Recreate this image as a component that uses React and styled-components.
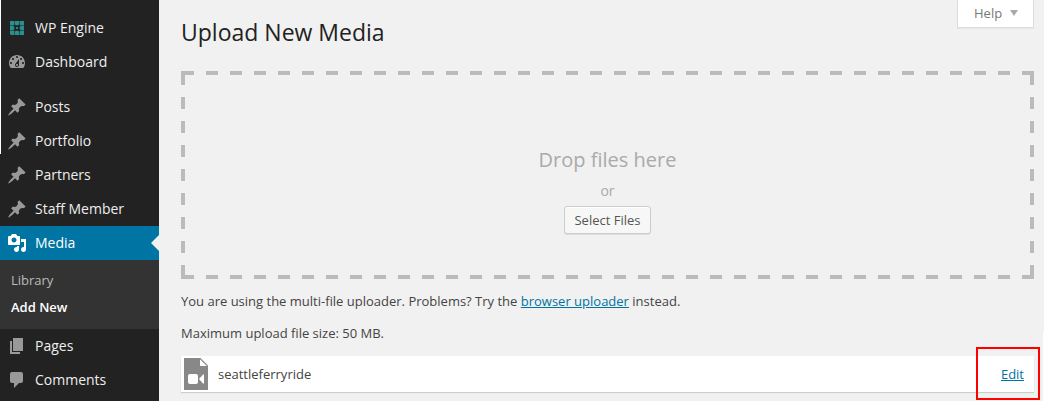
import React from "react";
import styled, { createGlobalStyle, css } from "styled-components";

const GlobalStyle = createGlobalStyle`
  * { box-sizing: border-box; }
  body {
    margin: 0;
    overflow: hidden;
    background: #f1f1f1;
    color: #444;
    font: 13px/20px "Open Sans", sans-serif;
  }
`;

const Page = styled.div`
  display: flex;
  height: 401px;
  position: relative;
`;

const Sidebar = styled.nav`
  width: 159px;
  flex: none;
  padding-top: 11px;
  background: #222;
`;

const MenuItem = styled.a`
  display: flex;
  align-items: center;
  gap: 8px;
  position: relative;
  height: 34px;
  padding-left: 7px;
  color: #eee;
  font-size: 14px;
  ${(p) =>
    p.$active &&
    css`
      background: #0074a2;
      color: #fff;
      &::after {
        content: "";
        position: absolute;
        right: 0;
        top: 9px;
        border: 8px solid transparent;
        border-right-color: #f1f1f1;
        border-left: 0;
      }
    `}
`;

const MenuIcon = styled.svg`
  width: 20px;
  height: 20px;
  flex: none;
  fill: ${(p) => p.$color || "#999"};
`;

const MenuGap = styled.div`
  height: 11px;
`;

const Submenu = styled.div`
  display: flex;
  flex-direction: column;
  height: 69px;
  padding: 7px 11px;
  background: #333;
`;

const SubmenuLink = styled.a`
  line-height: 27px;
  color: ${(p) => (p.$current ? "#fff" : "#bbb")};
  font-weight: ${(p) => (p.$current ? 600 : 400)};
`;

const Main = styled.main`
  flex: 1;
  padding: 0 10px 0 22px;
`;

const Header = styled.header`
  display: flex;
  justify-content: space-between;
  align-items: flex-start;
  height: 71px;
`;

const Title = styled.h1`
  margin: 18px 0 0;
  color: #222;
  font-size: 23px;
  line-height: 29px;
  font-weight: 400;
`;

const HelpButton = styled.a`
  display: flex;
  align-items: center;
  gap: 8px;
  width: 77px;
  height: 28px;
  padding: 0 0 1px 16px;
  border: 1px solid #ddd;
  border-top: 0;
  background: #fff;
  color: #777;
  box-shadow: 0 1px 1px rgba(0, 0, 0, 0.04);
`;

const Caret = styled.span`
  border: 4px solid transparent;
  border-top: 6px solid #aaa;
  border-bottom: 0;
`;

const dashX = "linear-gradient(90deg, #bbb 50%, transparent 50%)";
const dashY = "linear-gradient(#bbb 50%, transparent 50%)";
const corner = "linear-gradient(#bbb, #bbb)";

const DropZone = styled.section`
  display: flex;
  flex-direction: column;
  align-items: center;
  height: 208px;
  padding-top: 75px;
  color: #aaa;
  background:
    ${dashX} 1px 0 / 24px 4px repeat-x,
    ${dashX} 1px 100% / 24px 4px repeat-x,
    ${dashY} 0 2px / 4px 24px repeat-y,
    ${dashY} 100% 2px / 4px 24px repeat-y,
    ${corner} 0 0 / 4px 4px no-repeat,
    ${corner} 0 100% / 4px 4px no-repeat;
`;

const DropTitle = styled.p`
  margin: 0;
  font-size: 20px;
  line-height: 28px;
`;

const DropOr = styled.p`
  margin: 6px 0 5px;
  font-size: 14px;
  line-height: 21px;
`;

const Button = styled.button`
  width: 87px;
  height: 28px;
  padding: 0 0 1px;
  border: 1px solid #ccc;
  border-radius: 3px;
  background: #f7f7f7;
  box-shadow: inset 0 1px 0 #fff, 0 1px 0 rgba(0, 0, 0, 0.08);
  color: #555;
  font: 13px/24px "Open Sans", sans-serif;
`;

const Note = styled.p`
  margin: 12px 0 0;
`;

const Link = styled.a`
  color: #0074a2;
  text-decoration: underline;
`;

const MediaRow = styled.div`
  display: flex;
  align-items: center;
  height: 36px;
  margin-top: 13px;
  padding: 0 10px 0 3px;
  background: #fff;
  box-shadow: 0 1px 1px rgba(0, 0, 0, 0.15);
`;

const FileIcon = styled.svg`
  width: 24px;
  height: 32px;
  margin-right: 10px;
`;

const FileName = styled.span`
  flex: 1;
`;

const Highlight = styled.div`
  position: absolute;
  left: 976px;
  top: 347px;
  width: 64px;
  height: 53px;
  border: 2px solid #f00;
`;

const EdgeLine = styled.div`
  position: absolute;
  width: 1px;
  background: #fff;
  ${(p) => (p.$side === "left" ? "left: 0; top: 0; height: 154px;" : "right: 0; top: 333px; bottom: 0;")}
`;

const icons = {
  engine:
    "M3 3h4.4v3.4l-1 1H3zM7.9 3h4.2v3.4l-1 .9H8.9l-1-.9zM12.6 3H17v4.4h-3.4l-1-1zM3 7.9h3.4l.9 1v2.2l-.9 1H3zM17 7.9h-3.4l-.9 1v2.2l.9 1H17zM3 12.6h4.4V17H4l-1-1zM7.9 17v-3.4l1-.9h2.2l1 .9V17zM12.6 17v-3.4l1-1H17V17zM9.1 9.1h1.8v1.8H9.1z",
  dashboard:
    "M3.76 16h12.48c1.1-1.37 1.76-3.11 1.76-5 0-4.42-3.58-8-8-8s-8 3.58-8 8c0 1.89.66 3.63 1.76 5zM10 4c.55 0 1 .45 1 1s-.45 1-1 1-1-.45-1-1 .45-1 1-1zM6 6c.55 0 1 .45 1 1s-.45 1-1 1-1-.45-1-1 .45-1 1-1zm8 0c.55 0 1 .45 1 1s-.45 1-1 1-1-.45-1-1 .45-1 1-1zm-5.37 5.55L12 7v6c0 1.1-.9 2-2 2s-2-.9-2-2c0-.57.24-1.08.63-1.45zM4 10c.55 0 1 .45 1 1s-.45 1-1 1-1-.45-1-1 .45-1 1-1zm12 0c.55 0 1 .45 1 1s-.45 1-1 1-1-.45-1-1 .45-1 1-1zm-5 3c0-.55-.45-1-1-1s-1 .45-1 1 .45 1 1 1 1-.45 1-1z",
  pin: "M10.44 3.02l1.82-1.82 6.36 6.35-1.83 1.82c-1.05-.68-2.48-.57-3.41.36l-.75.75c-.92.93-1.04 2.35-.35 3.41l-1.83 1.82-2.41-2.41-2.8 2.79c-.42.42-3.38 2.71-3.8 2.29s1.86-3.39 2.28-3.81l2.79-2.79L4.1 9.36l1.83-1.82c1.05.69 2.48.57 3.4-.36l.75-.75c.93-.92 1.05-2.35.36-3.41z",
  media:
    "M13 11V4c0-.55-.45-1-1-1h-1.67L9 1H5L3.67 3H2c-.55 0-1 .45-1 1v7c0 .55.45 1 1 1h10c.55 0 1-.45 1-1zM7 4.5c1.38 0 2.5 1.12 2.5 2.5S8.38 9.5 7 9.5 4.5 8.38 4.5 7 5.62 4.5 7 4.5zM14 6h5v10.5c0 1.38-1.12 2.5-2.5 2.5S14 17.88 14 16.5s1.12-2.5 2.5-2.5c.17 0 .34.02.5.05V9h-3V6zm-4 8.05V13h2v3.5c0 1.38-1.12 2.5-2.5 2.5S7 17.88 7 16.5 8.12 14 9.5 14c.17 0 .34.02.5.05z",
  pages: "M6 15V2h10v13H6zm-1 1h8v2H3V5h2v11z",
  comments: "M5 2h9c1.1 0 2 .9 2 2v7c0 1.1-.9 2-2 2h-2l-5 5v-5H5c-1.1 0-2-.9-2-2V4c0-1.1.9-2 2-2z",
};

function Item({ icon, color, active, children }) {
  return (
    <MenuItem $active={active}>
      <MenuIcon viewBox="0 0 20 20" $color={active ? "#fff" : color}>
        <path fillRule="evenodd" d={icons[icon]} />
      </MenuIcon>
      {children}
    </MenuItem>
  );
}

export default function App() {
  return (
    <Page>
      <GlobalStyle />
      <Sidebar>
        <Item icon="engine" color="#2a8e8e">WP Engine</Item>
        <Item icon="dashboard">Dashboard</Item>
        <MenuGap />
        <Item icon="pin">Posts</Item>
        <Item icon="pin">Portfolio</Item>
        <Item icon="pin">Partners</Item>
        <Item icon="pin">Staff Member</Item>
        <Item icon="media" active>Media</Item>
        <Submenu>
          <SubmenuLink>Library</SubmenuLink>
          <SubmenuLink $current>Add New</SubmenuLink>
        </Submenu>
        <Item icon="pages">Pages</Item>
        <Item icon="comments">Comments</Item>
      </Sidebar>
      <Main>
        <Header>
          <Title>Upload New Media</Title>
          <HelpButton>
            Help <Caret />
          </HelpButton>
        </Header>
        <DropZone>
          <DropTitle>Drop files here</DropTitle>
          <DropOr>or</DropOr>
          <Button>Select Files</Button>
        </DropZone>
        <Note>
          You are using the multi-file uploader. Problems? Try the <Link>browser uploader</Link> instead.
        </Note>
        <Note>Maximum upload file size: 50 MB.</Note>
        <MediaRow>
          <FileIcon viewBox="0 0 24 32">
            <path d="M0 0h16.5L24 7.5V32H0z" fill="#888" />
            <path d="M16 1.2L22.8 8H16z" fill="#fff" />
            <rect x="4" y="16" width="10" height="10" rx="2" fill="#fff" />
            <path d="M15 21l4-4.5h1v9h-1z" fill="#fff" />
          </FileIcon>
          <FileName>seattleferryride</FileName>
          <Link>Edit</Link>
        </MediaRow>
      </Main>
      <EdgeLine $side="left" />
      <EdgeLine $side="right" />
      <Highlight />
    </Page>
  );
}
